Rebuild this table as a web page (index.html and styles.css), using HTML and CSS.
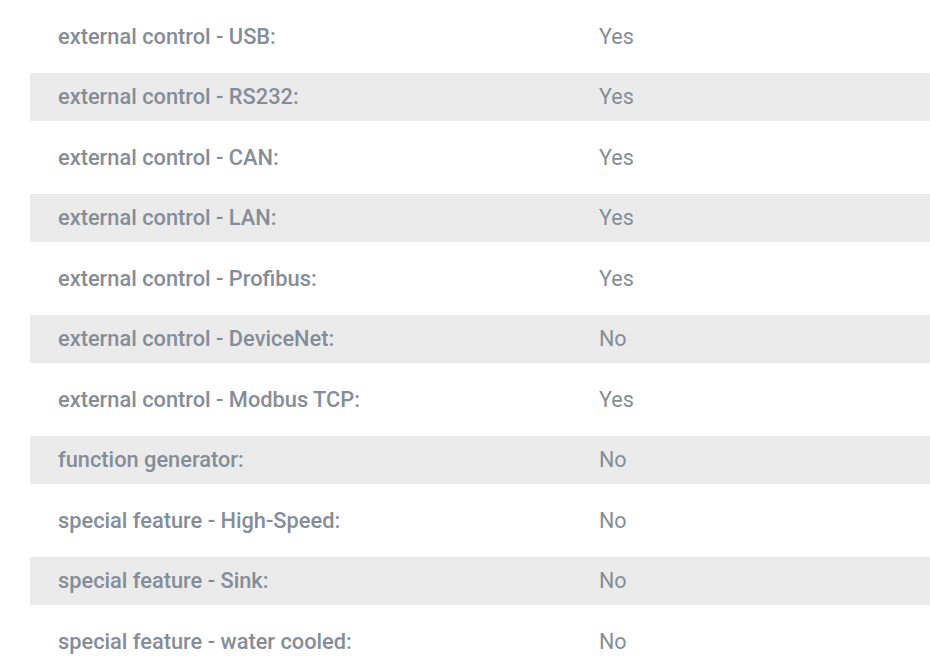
FILE: index.html
```html
<!DOCTYPE html>
<html lang="en">
<head>
<meta charset="utf-8">
<title>Specs</title>
<link rel="stylesheet" href="styles.css">
</head>
<body>
<div class="specs">
  <div class="row"><div class="label">external control - USB:</div><div class="value">Yes</div></div>
  <div class="row alt"><div class="label">external control - RS232:</div><div class="value">Yes</div></div>
  <div class="row"><div class="label">external control - CAN:</div><div class="value">Yes</div></div>
  <div class="row alt"><div class="label">external control - LAN:</div><div class="value">Yes</div></div>
  <div class="row"><div class="label">external control - Profibus:</div><div class="value">Yes</div></div>
  <div class="row alt"><div class="label">external control - DeviceNet:</div><div class="value">No</div></div>
  <div class="row"><div class="label">external control - Modbus TCP:</div><div class="value">Yes</div></div>
  <div class="row alt"><div class="label">function generator:</div><div class="value">No</div></div>
  <div class="row"><div class="label">special feature - High-Speed:</div><div class="value">No</div></div>
  <div class="row alt"><div class="label">special feature - Sink:</div><div class="value">No</div></div>
  <div class="row"><div class="label">special feature - water cooled:</div><div class="value">No</div></div>
</div>
</body>
</html>
```
FILE: styles.css
```css
html, body {
  margin: 0;
  padding: 0;
  background: #ffffff;
}
body {
  font-family: Roboto, "Liberation Sans", sans-serif;
  color: #858d98;
  overflow: hidden;
}
.specs {
  display: flex;
  flex-direction: column;
  gap: 12.5px;
  padding: 12px 0 0 30px;
}
.row {
  display: grid;
  grid-template-columns: 569px 1fr;
  align-items: center;
  height: 48px;
  font-size: 21.5px;
}
.row.alt {
  background: #ebebeb;
}
.label {
  padding-left: 28px;
  font-size: 21.8px;
  font-weight: 500;
}
.value {
  font-weight: 400;
}
```
